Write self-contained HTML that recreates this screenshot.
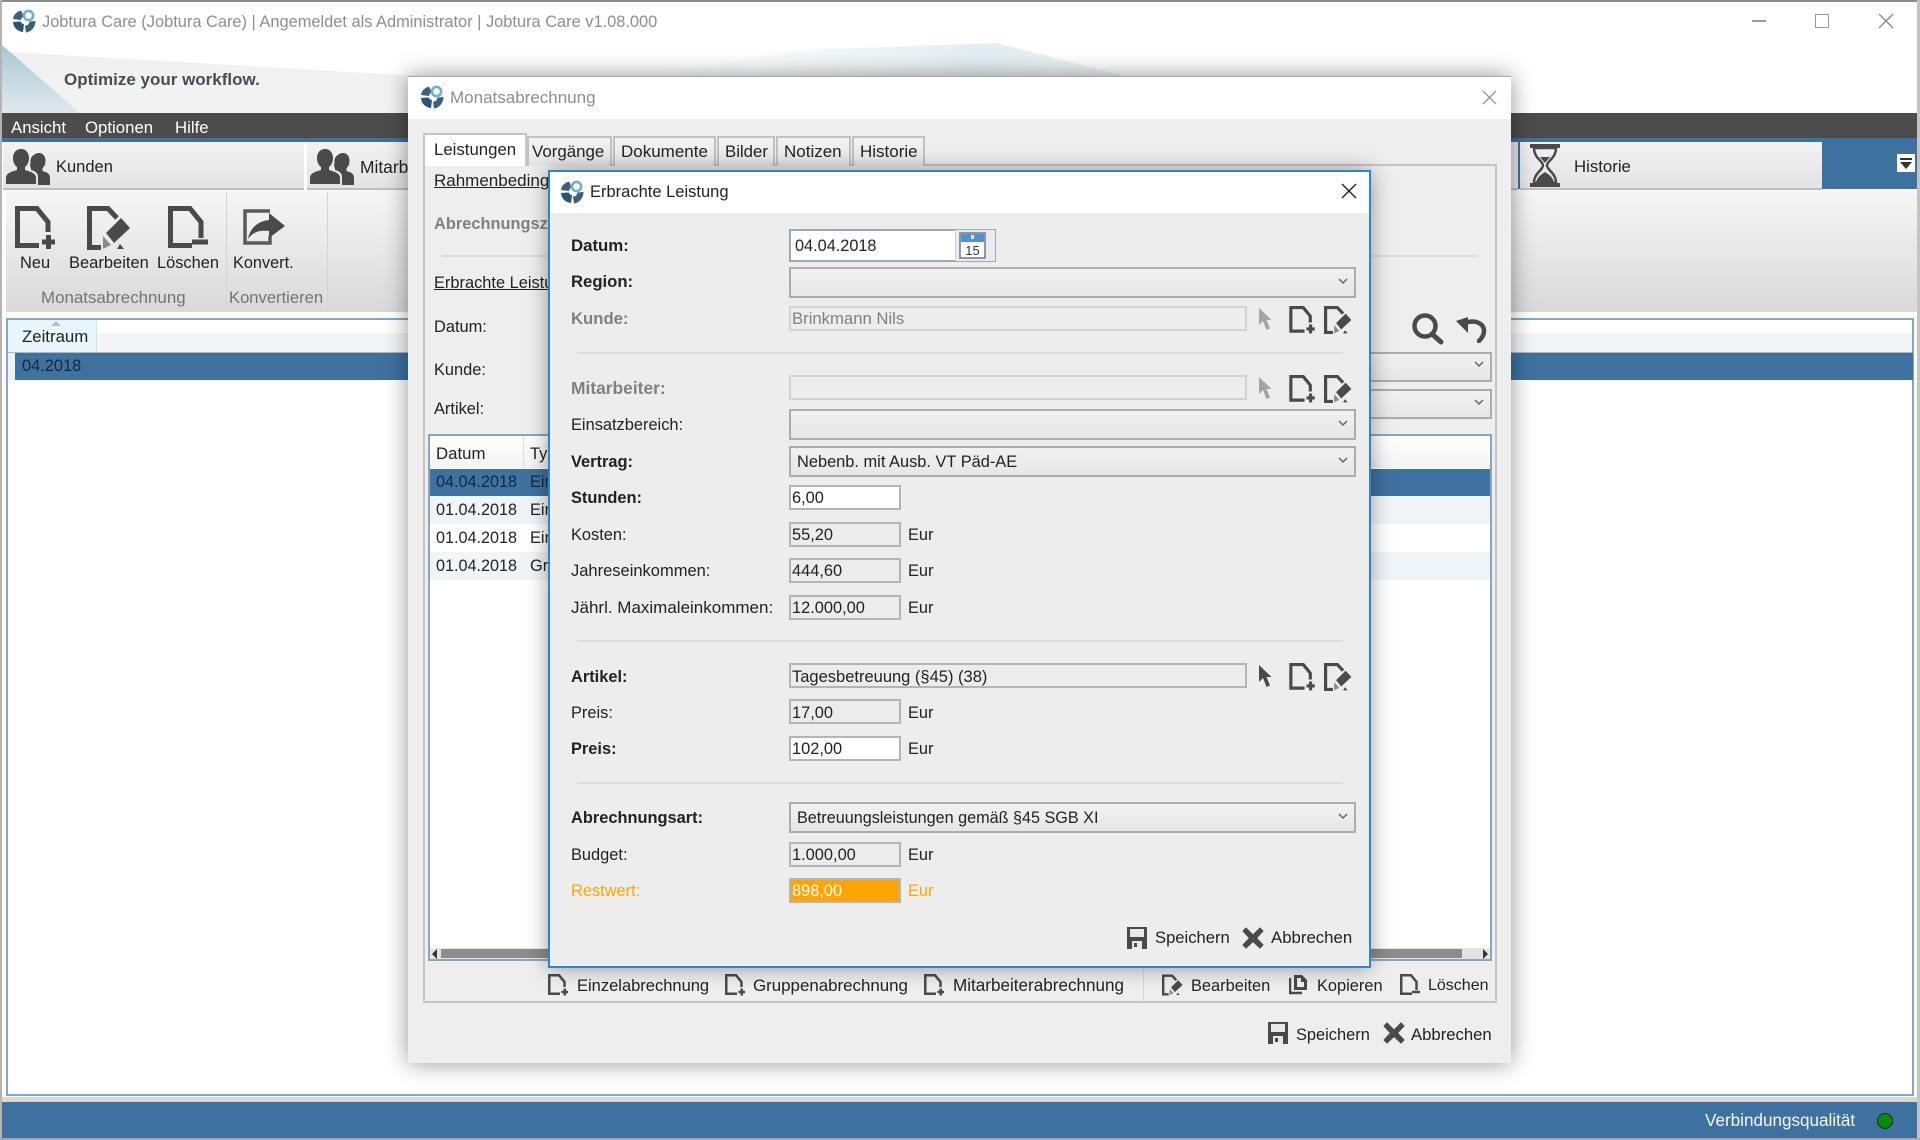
<!DOCTYPE html>
<html lang="de"><head><meta charset="utf-8"><title>Jobtura Care</title>
<style>
html,body{margin:0;padding:0;background:#fff}
#r{position:relative;width:1920px;height:1140px;overflow:hidden;background:#fff;font-family:"Liberation Sans",Arial,sans-serif;font-size:16.400px;color:#222;filter:blur(.3px)}
#r div,#r span,#r svg{position:absolute}
.t{white-space:nowrap;line-height:20px;height:20px}
.b{font-weight:bold}
.g{color:#808080}
.u{text-decoration:underline}
.cb{box-sizing:border-box;border:2px solid #acacac;background:linear-gradient(#f1f1f1,#e6e6e6)}
.in{box-sizing:border-box;border:2px solid #b4b4b4;background:#ececec}
.w{background:#fff}
.dis{border-color:#d2d2d2;background:#ededed}
.hr{height:2px;background:#dcdcdc}
.tab{box-sizing:border-box;border:2px solid #c2c2c2;border-bottom:0;background:linear-gradient(#f3f3f3,#e6e6e6);top:136px;height:30px}
</style></head><body>
<div id="r">
<svg width="0" height="0" style="position:absolute">
<defs>
<symbol id="logo" viewBox="0 0 24 24">
<path d="M9 1.500C5 2.500 1.500 5.500 1 10l8 1c.4-2 1.300-3 3-3.500z" fill="#3e5f80"/>
<circle cx="16.500" cy="6.500" r="4.600" fill="none" stroke="#6fb0d0" stroke-width="2.600"/>
<path d="M1 13c.3 5 4 9.500 10 10l1-8c-2-.2-3-1-3.500-2.500z" fill="#2f5377"/>
<circle cx="7" cy="16" r="3.500" fill="#2f5377"/>
<path d="M23.500 12c0 6-4.500 11-9.500 11.500l-1-7c3 0 4-1.500 4.500-4z" fill="#3e5f80"/>
</symbol>
<symbol id="pp" viewBox="0 0 40 44"><path d="M24 39.500H2.500V2.500H22L33 16V26" fill="none" stroke="#4a4a4a" stroke-width="5"/><path d="M27 36H40M33.500 29V43" stroke="#4a4a4a" stroke-width="5" fill="none"/></symbol>
<symbol id="pm" viewBox="0 0 40 44"><path d="M24 39.500H2.500V2.500H22L33 16V32" fill="none" stroke="#4a4a4a" stroke-width="5"/><path d="M24 36H40" stroke="#4a4a4a" stroke-width="5" fill="none"/></symbol>
<symbol id="pe" viewBox="0 0 44 44"><path d="M14 41.500H2.500V2.500H21L30 12" fill="none" stroke="#4a4a4a" stroke-width="5"/><path d="M34 12L43 22L27 37L19 27Z" fill="#4a4a4a"/><path d="M16 30L24 39L16 43Z" fill="#8a8a8a"/><path d="M33 38L37 43H30Z" fill="#4a4a4a"/></symbol>
<symbol id="cur" viewBox="0 0 14 24"><path d="M1 1V18L5 14L8.500 23L12 21.500L8.500 13H13.500Z"/></symbol>
<symbol id="sv" viewBox="0 0 20 22"><path d="M0 0H20V22H0Z" fill="#4a4a4a"/><path d="M3 2H17V10H3Z" fill="#e9e9e9"/><path d="M5 14H15V22H5Z" fill="#e9e9e9"/><path d="M7 16H10V20H7Z" fill="#4a4a4a"/></symbol>
<symbol id="xx" viewBox="0 0 22 22"><path d="M4 1L11 8L18 1L21 4L14.500 11L21 18L18 21L11 14.500L4 21L1 18L7.500 11L1 4Z" fill="#4a4a4a" stroke="#4a4a4a" stroke-width="1"/></symbol>
<symbol id="ch" viewBox="0 0 10 7"><path d="M1 1L5 5L9 1" fill="none" stroke="#666" stroke-width="1.500"/></symbol>
<symbol id="usr" viewBox="0 0 44 36"><path d="M15 0c5 0 8 4 8 9 0 4-1.500 7-4 9v3c5 1.500 11 3 11 8v6H0v-6c0-5 6-6.500 11-8v-3c-2.500-2-4-5-4-9 0-5 3-9 8-9z" fill="#4a4a4a"/><path d="M33 4c4 0 6.500 3.500 6.500 7.500 0 3.500-1 6-3 7.500v3c3 1 7.500 2 7.500 6.500V36H32V28c0-4-3-6-7-7v-2c-1.500-1.500-.500-3.500-.500-7.500C24.500 7.500 29 4 33 4z" fill="#4a4a4a"/></symbol>
</defs>
</svg>

<!-- main window chrome -->
<div style="left:0;top:0;width:1920px;height:2px;background:#8c8c8c"></div>
<div style="left:0;top:0;width:2px;height:1140px;background:#b4b4b4"></div>
<div style="left:1917px;top:0;width:3px;height:1140px;background:#c4c4c4"></div>
<svg style="left:12px;top:9px" width="24" height="24"><use href="#logo"/></svg>
<span class="t g" style="left:42px;top:12px;font-size:16.400px;color:#8e8e8e">Jobtura Care (Jobtura Care) | Angemeldet als Administrator | Jobtura Care v1.08.000</span>
<svg style="left:0;top:40px" width="1500" height="74">
<defs><linearGradient id="a" x1="0" y1="0" x2="0" y2="1"><stop offset="0" stop-color="#a6c9d5"/><stop offset="1" stop-color="#dfe9ec"/></linearGradient>
<linearGradient id="c" x1="0" y1="0" x2="1" y2="0"><stop offset="0" stop-color="#eef4f6" stop-opacity="0"/><stop offset=".7" stop-color="#e3eef2"/><stop offset="1" stop-color="#edf3f5"/></linearGradient>
<linearGradient id="d" x1="0" y1="0" x2="0" y2="1"><stop offset="0" stop-color="#f0f0f0"/><stop offset="1" stop-color="#f3f3f3"/></linearGradient></defs>
<polygon points="10,12 420,36 420,73 80,73" fill="url(#d)"/>
<polygon points="2,5 80,73 2,73" fill="url(#a)"/>
<polygon points="640,36 800,10 997,3 1125,36" fill="url(#c)"/>
</svg>
<span class="t b" style="left:64px;top:70px;font-size:17px;color:#454d5a">Optimize your workflow.</span>

<div style="left:2px;top:113px;width:1915px;height:25px;background:#4c4c4c"></div>
<div style="left:2px;top:138px;width:1915px;height:4px;background:#3e71a0"></div>
<span class="t" style="left:11px;top:118px;color:#fff;font-size:16.800px">Ansicht</span>
<span class="t" style="left:85px;top:118px;color:#fff;font-size:16.800px">Optionen</span>
<span class="t" style="left:175px;top:118px;color:#fff;font-size:16.800px">Hilfe</span>

<div style="left:1500px;top:142px;width:417px;height:47px;background:#3e71a0"></div>
<div style="left:3px;top:142px;width:301px;height:46px;background:linear-gradient(#f2f2f2,#e3e3e3);border-bottom:2px solid #bdbdbd"></div>
<div style="left:307px;top:142px;width:300px;height:46px;background:linear-gradient(#f2f2f2,#e3e3e3);border-bottom:2px solid #bdbdbd"></div>
<div style="left:1510px;top:142px;width:8px;height:46px;background:#e8e8e8;border-bottom:2px solid #bdbdbd"></div>
<div style="left:1520px;top:142px;width:302px;height:46px;background:linear-gradient(#f2f2f2,#e3e3e3);border-bottom:2px solid #bdbdbd"></div>
<svg style="left:6px;top:149px" width="44" height="36"><use href="#usr"/></svg>
<span class="t" style="left:56px;top:157px;font-size:16.500px">Kunden</span>
<svg style="left:310px;top:149px" width="44" height="36"><use href="#usr"/></svg>
<span class="t" style="left:360px;top:157px;font-size:17.400px">Mitarbeiter</span>
<svg style="left:1530px;top:144px" width="30" height="43" viewBox="0 0 30 43"><path d="M0 0H30V4H0ZM0 39H30V43H0Z" fill="#4a4a4a"/><path d="M4 4C4 14 13 17 13 21.500C13 26 4 29 4 39H26C26 29 17 26 17 21.500C17 17 26 14 26 4Z" fill="none" stroke="#4a4a4a" stroke-width="2.500"/><path d="M10 13H20L15 19ZM6 38C8 32 12 30 15 28C18 30 22 32 24 38Z" fill="#4a4a4a"/></svg>
<span class="t" style="left:1574px;top:157px;font-size:16.800px">Historie</span>
<div style="left:1897px;top:154px;width:18px;height:18px;background:#fff"></div>
<svg style="left:1899px;top:157px" width="14" height="13"><path d="M1 1H13V3H1ZM1 5H13L7 12Z" fill="#333"/></svg>

<!-- ribbon -->
<div style="left:6px;top:190px;width:1911px;height:122px;background:linear-gradient(#f6f6f6,#d9d9d9)"></div>
<div style="left:226px;top:192px;width:1px;height:120px;background:#d4d4d4"></div>
<div style="left:327px;top:192px;width:1px;height:120px;background:#d4d4d4"></div>
<svg style="left:15px;top:206px" width="40" height="44"><use href="#pp"/></svg>
<svg style="left:87px;top:206px" width="44" height="44"><use href="#pe"/></svg>
<svg style="left:168px;top:206px" width="40" height="44"><use href="#pm"/></svg>
<svg style="left:242px;top:208px" width="44" height="38" viewBox="0 0 44 38"><path d="M28 3H3V35H28V28" fill="none" stroke="#5a5a5a" stroke-width="3.500"/><path d="M27 5L43 18L27 30V23C17 22 11 24 6 31C8 20 16 13 27 12Z" fill="#4a4a4a"/></svg>
<span class="t" style="left:20px;top:253px;font-size:16.400px">Neu</span>
<span class="t" style="left:69px;top:253px;font-size:16.500px">Bearbeiten</span>
<span class="t" style="left:157px;top:253px;font-size:16.400px">Löschen</span>
<span class="t" style="left:233px;top:253px;font-size:16.300px">Konvert.</span>
<span class="t" style="left:41px;top:288px;color:#747474;font-size:16.900px">Monatsabrechnung</span>
<span class="t" style="left:229px;top:288px;color:#747474;font-size:16.600px">Konvertieren</span>

<!-- main table -->
<div style="left:6px;top:318px;width:1908px;height:778px;box-sizing:border-box;border:2px solid #86a6c4;background:#fff"></div>
<div style="left:8px;top:320px;width:1904px;height:32px;background:linear-gradient(#fff,#fff 40%,#f3f4f6 40%,#f3f4f6)"></div>
<div style="left:8px;top:320px;width:8px;height:60px;background:#e9f4fb"></div>
<div style="left:16px;top:320px;width:80px;height:32px;background:#e9f4fb;border-right:1px solid #cfe3f0"></div>
<svg style="left:48px;top:320px" width="16" height="7"><path d="M3 6L8 1L13 6Z" fill="#a8c0d0"/></svg>
<div style="left:8px;top:352px;width:1904px;height:1px;background:#b0b8c0"></div>
<div style="left:15px;top:353px;width:1898px;height:27px;background:#3f71a1"></div>
<span class="t" style="left:22px;top:327px;font-size:16.800px">Zeitraum</span>
<span class="t" style="left:22px;top:356px;font-size:16.400px;color:#14283c">04.2018</span>

<!-- status -->
<div style="left:2px;top:1097px;width:1915px;height:5px;background:#d8d8d8"></div>
<div style="left:2px;top:1102px;width:1915px;height:36px;background:#3e71a0"></div>
<div style="left:0;top:1138px;width:1920px;height:2px;background:#a8a8a8"></div>
<span class="t" style="left:1705px;top:1111px;color:#f4f8fb;font-size:17.100px">Verbindungsqualität</span>
<div style="left:1877px;top:1113px;width:14px;height:14px;border-radius:50%;background:#078a0d;border:1px solid #1a2a20"></div>

<!-- window controls -->
<div style="left:1752px;top:20px;width:14px;height:2px;background:#9a9a9a"></div>
<div style="left:1815px;top:14px;width:12px;height:12px;border:1.500px solid #999"></div>
<svg style="left:1878px;top:13px" width="16" height="16"><path d="M1 1L15 15M15 1L1 15" stroke="#888" stroke-width="1.300"/></svg>

<!-- Monatsabrechnung -->
<div style="left:408px;top:76px;width:1103px;height:987px;background:#eeeeee;box-shadow:0 0 22px rgba(0,0,0,.42);border-top:1px solid #a5a5a5;box-sizing:border-box"></div>
<div style="left:408px;top:77px;width:1103px;height:42px;background:#fff"></div>
<svg style="left:420px;top:85px" width="24" height="24"><use href="#logo"/></svg>
<span class="t" style="left:450px;top:88px;color:#8d8d8d;font-size:17px">Monatsabrechnung</span>
<svg style="left:1482px;top:90px" width="15" height="15"><path d="M1 1L14 14M14 1L1 14" stroke="#999" stroke-width="1.300"/></svg>

<div style="left:423px;top:164px;width:1074px;height:839px;box-sizing:border-box;border:2px solid #c4c4c4;background:#eeeeee"></div>
<div class="tab" style="left:527px;width:85px"></div>
<div class="tab" style="left:613px;width:103px"></div>
<div class="tab" style="left:717px;width:58px"></div>
<div class="tab" style="left:776px;width:75px"></div>
<div class="tab" style="left:852px;width:73px"></div>
<div style="left:423px;top:133px;width:104px;height:33px;box-sizing:border-box;border:2px solid #c4c4c4;border-bottom:0;background:#fff"></div>
<span class="t" style="left:434px;top:140px;font-size:16.800px">Leistungen</span>
<span class="t" style="left:532px;top:142px;font-size:16.900px">Vorgänge</span>
<span class="t" style="left:621px;top:142px;font-size:17px">Dokumente</span>
<span class="t" style="left:725px;top:142px;font-size:16.800px">Bilder</span>
<span class="t" style="left:784px;top:142px;font-size:17px">Notizen</span>
<span class="t" style="left:860px;top:142px;font-size:17px">Historie</span>

<span class="t u" style="left:434px;top:171px;font-size:17px">Rahmenbedingungen</span>
<span class="t b" style="left:434px;top:214px;font-size:16.400px;color:#808080">Abrechnungszeitraum</span>
<div class="hr" style="left:441px;top:255px;width:1036px"></div>
<span class="t u" style="left:434px;top:273px;font-size:16.400px">Erbrachte Leistungen</span>
<span class="t" style="left:434px;top:317px;font-size:16.400px">Datum:</span>
<span class="t" style="left:434px;top:360px;font-size:16.400px">Kunde:</span>
<span class="t" style="left:434px;top:399px;font-size:16.400px">Artikel:</span>
<svg style="left:1411px;top:313px" width="33" height="32" viewBox="0 0 33 32"><circle cx="14" cy="13" r="10.500" fill="none" stroke="#4a4a4a" stroke-width="4.500"/><path d="M21 21L30 29" stroke="#4a4a4a" stroke-width="5" stroke-linecap="round"/></svg>
<svg style="left:1454px;top:316px" width="33" height="27" viewBox="0 0 33 27"><path d="M11 7C22 3 30 8 30 15C30 19 28 22 25 25" fill="none" stroke="#4a4a4a" stroke-width="4.500" stroke-linecap="round"/><path d="M2 5L14 1V17Z" fill="#4a4a4a"/></svg>
<div class="cb" style="left:1300px;top:352px;width:192px;height:30px"></div>
<div class="cb" style="left:1300px;top:389px;width:192px;height:30px"></div>
<svg style="left:1474px;top:361px" width="10" height="7"><use href="#ch"/></svg>
<svg style="left:1474px;top:399px" width="10" height="7"><use href="#ch"/></svg>

<div style="left:428px;top:434px;width:1064px;height:527px;box-sizing:border-box;border:2px solid #86a6c4;background:#fff"></div>
<div style="left:430px;top:436px;width:1060px;height:32px;background:linear-gradient(#fff,#f3f3f3)"></div>
<div style="left:523px;top:436px;width:1px;height:32px;background:#dcdcdc"></div>
<div style="left:430px;top:469px;width:1060px;height:27px;background:#3f71a1"></div>
<div style="left:430px;top:496px;width:1060px;height:28px;background:#f0f5fa"></div>
<div style="left:430px;top:552px;width:1060px;height:28px;background:#f0f5fa"></div>
<span class="t" style="left:436px;top:444px;font-size:16.800px">Datum</span>
<span class="t" style="left:530px;top:444px;font-size:16.400px">Typ</span>
<span class="t" style="left:436px;top:472px;font-size:16.200px;color:#14283c">04.04.2018</span>
<span class="t" style="left:530px;top:472px;font-size:16.400px;color:#14283c">Einzel</span>
<span class="t" style="left:436px;top:500px;font-size:16.200px">01.04.2018</span>
<span class="t" style="left:530px;top:500px;font-size:16.400px">Einzel</span>
<span class="t" style="left:436px;top:528px;font-size:16.200px">01.04.2018</span>
<span class="t" style="left:530px;top:528px;font-size:16.400px">Einzel</span>
<span class="t" style="left:436px;top:556px;font-size:16.200px">01.04.2018</span>
<span class="t" style="left:530px;top:556px;font-size:16.400px">Gruppe</span>
<div style="left:430px;top:948px;width:1060px;height:11px;background:#e4e4e4"></div>
<div style="left:441px;top:949px;width:1021px;height:9px;background:#8c8c8c"></div>
<svg style="left:431px;top:949px" width="8" height="10"><path d="M6 0L1 5L6 10Z" fill="#333"/></svg>
<svg style="left:1481px;top:949px" width="8" height="10"><path d="M2 0L7 5L2 10Z" fill="#333"/></svg>

<div style="left:1143px;top:968px;width:1px;height:34px;background:#d8d8d8"></div>
<svg style="left:548px;top:974px" width="20" height="22"><use href="#pp"/></svg>
<span class="t" style="left:577px;top:976px;font-size:16.500px">Einzelabrechnung</span>
<svg style="left:725px;top:974px" width="20" height="22"><use href="#pp"/></svg>
<span class="t" style="left:753px;top:976px;font-size:16.900px">Gruppenabrechnung</span>
<svg style="left:924px;top:974px" width="20" height="22"><use href="#pp"/></svg>
<span class="t" style="left:953px;top:976px;font-size:17.100px">Mitarbeiterabrechnung</span>
<svg style="left:1162px;top:974px" width="21" height="22"><use href="#pe"/></svg>
<span class="t" style="left:1191px;top:976px;font-size:16.400px">Bearbeiten</span>
<svg style="left:1289px;top:974px" width="20" height="22" viewBox="0 0 20 22"><path d="M1 4V19H13" fill="none" stroke="#4a4a4a" stroke-width="2.500"/><path d="M5 1H13L18 6V16H5Z" fill="#4a4a4a"/><path d="M8 4H12V8H15V13H8Z" fill="#eee"/></svg>
<span class="t" style="left:1317px;top:976px;font-size:16.400px">Kopieren</span>
<svg style="left:1400px;top:974px" width="20" height="22"><use href="#pm"/></svg>
<span class="t" style="left:1428px;top:976px;font-size:16px">Löschen</span>

<svg style="left:1268px;top:1022px" width="20" height="22"><use href="#sv"/></svg>
<span class="t" style="left:1296px;top:1025px;font-size:16.400px">Speichern</span>
<svg style="left:1383px;top:1022px" width="22" height="22"><use href="#xx"/></svg>
<span class="t" style="left:1411px;top:1025px;font-size:16.700px">Abbrechen</span>

<!-- Erbrachte Leistung dialog -->
<div style="left:548px;top:170px;width:823px;height:798px;box-sizing:border-box;border:2px solid #2a86d0;background:#ededed;box-shadow:0 0 20px rgba(0,0,0,.38)"></div>
<div style="left:550px;top:172px;width:819px;height:41px;background:#fff"></div>
<svg style="left:560px;top:180px" width="24" height="24"><use href="#logo"/></svg>
<span class="t" style="left:590px;top:182px;font-size:16.500px">Erbrachte Leistung</span>
<svg style="left:1341px;top:183px" width="16" height="16"><path d="M1 1L15 15M15 1L1 15" stroke="#222" stroke-width="1.400"/></svg>

<span class="t b" style="left:571px;top:236px;font-size:16.800px">Datum:</span>
<div class="in w" style="left:789px;top:229px;width:207px;height:33px;border-color:#9aa9b8"></div>
<div style="left:955px;top:230px;width:39px;height:31px;background:#e8ecf0;border-left:1px solid #d0d0d0"></div>
<svg style="left:959px;top:232px" width="28" height="27" viewBox="0 0 28 27"><rect x="1" y="1" width="25" height="25" fill="#fff" stroke="#6c7a86" stroke-width="1.500"/><rect x="2" y="2" width="23" height="8" fill="#4e93d0"/><rect x="12" y="3" width="3" height="4" fill="#dbe9f5"/><text x="13.500" y="23" text-anchor="middle" font-size="13" font-family="Liberation Sans" fill="#333">15</text></svg>
<span class="t" style="left:795px;top:236px;font-size:16.300px">04.04.2018</span>

<span class="t b" style="left:571px;top:272px;font-size:16.700px">Region:</span>
<div class="cb" style="left:789px;top:267px;width:567px;height:31px"></div>
<svg style="left:1338px;top:278px" width="10" height="7"><use href="#ch"/></svg>

<span class="t b g" style="left:571px;top:309px;font-size:16.700px">Kunde:</span>
<div class="in dis" style="left:789px;top:306px;width:458px;height:25px"></div>
<span class="t g" style="left:792px;top:309px;font-size:16.700px">Brinkmann Nils</span>
<svg style="left:1258px;top:307px;fill:#a4a4a4" width="14" height="24"><use href="#cur"/></svg>
<svg style="left:1289px;top:306px" width="26" height="28"><use href="#pp"/></svg>
<svg style="left:1324px;top:306px" width="28" height="28"><use href="#pe"/></svg>

<div class="hr" style="left:577px;top:352px;width:766px"></div>

<span class="t b g" style="left:571px;top:378px;font-size:17.400px">Mitarbeiter:</span>
<div class="in dis" style="left:789px;top:375px;width:458px;height:25px"></div>
<svg style="left:1258px;top:376px;fill:#a4a4a4" width="14" height="24"><use href="#cur"/></svg>
<svg style="left:1289px;top:375px" width="26" height="28"><use href="#pp"/></svg>
<svg style="left:1324px;top:375px" width="28" height="28"><use href="#pe"/></svg>

<span class="t" style="left:571px;top:415px">Einsatzbereich:</span>
<div class="cb" style="left:789px;top:409px;width:567px;height:31px"></div>
<svg style="left:1338px;top:420px" width="10" height="7"><use href="#ch"/></svg>

<span class="t b" style="left:571px;top:452px">Vertrag:</span>
<div class="cb" style="left:789px;top:446px;width:567px;height:31px"></div>
<span class="t" style="left:797px;top:452px;font-size:16.400px">Nebenb. mit Ausb. VT Päd-AE</span>
<svg style="left:1338px;top:457px" width="10" height="7"><use href="#ch"/></svg>

<span class="t b" style="left:571px;top:488px">Stunden:</span>
<div class="in w" style="left:789px;top:485px;width:112px;height:25px"></div>
<span class="t" style="left:792px;top:488px;font-size:16.400px">6,00</span>

<span class="t" style="left:571px;top:525px">Kosten:</span>
<div class="in" style="left:789px;top:522px;width:112px;height:25px"></div>
<span class="t" style="left:792px;top:525px">55,20</span>
<span class="t" style="left:908px;top:525px">Eur</span>

<span class="t" style="left:571px;top:561px;font-size:16.500px">Jahreseinkommen:</span>
<div class="in" style="left:789px;top:558px;width:112px;height:25px"></div>
<span class="t" style="left:792px;top:561px">444,60</span>
<span class="t" style="left:908px;top:561px">Eur</span>

<span class="t" style="left:571px;top:598px;font-size:17px">Jährl. Maximaleinkommen:</span>
<div class="in" style="left:789px;top:595px;width:112px;height:25px"></div>
<span class="t" style="left:792px;top:598px">12.000,00</span>
<span class="t" style="left:908px;top:598px">Eur</span>

<div class="hr" style="left:577px;top:640px;width:766px"></div>

<span class="t b" style="left:571px;top:667px">Artikel:</span>
<div class="in" style="left:789px;top:663px;width:458px;height:25px"></div>
<span class="t" style="left:792px;top:667px;font-size:16.500px">Tagesbetreuung (§45) (38)</span>
<svg style="left:1258px;top:664px;fill:#4a4a4a" width="14" height="24"><use href="#cur"/></svg>
<svg style="left:1289px;top:663px" width="26" height="28"><use href="#pp"/></svg>
<svg style="left:1324px;top:663px" width="28" height="28"><use href="#pe"/></svg>

<span class="t" style="left:571px;top:703px">Preis:</span>
<div class="in" style="left:789px;top:699px;width:112px;height:25px"></div>
<span class="t" style="left:792px;top:703px">17,00</span>
<span class="t" style="left:908px;top:703px">Eur</span>

<span class="t b" style="left:571px;top:739px">Preis:</span>
<div class="in w" style="left:789px;top:736px;width:112px;height:25px"></div>
<span class="t" style="left:792px;top:739px">102,00</span>
<span class="t" style="left:908px;top:739px">Eur</span>

<div class="hr" style="left:577px;top:782px;width:766px"></div>

<span class="t b" style="left:571px;top:808px">Abrechnungsart:</span>
<div class="cb" style="left:789px;top:802px;width:567px;height:31px"></div>
<span class="t" style="left:797px;top:808px;font-size:16.200px">Betreuungsleistungen gemäß §45 SGB XI</span>
<svg style="left:1338px;top:813px" width="10" height="7"><use href="#ch"/></svg>

<span class="t" style="left:571px;top:845px">Budget:</span>
<div class="in" style="left:789px;top:842px;width:112px;height:25px"></div>
<span class="t" style="left:792px;top:845px">1.000,00</span>
<span class="t" style="left:908px;top:845px">Eur</span>

<span class="t" style="left:571px;top:881px;color:#ffa500">Restwert:</span>
<div class="in" style="left:789px;top:878px;width:112px;height:25px;background:#ffa500"></div>
<span class="t" style="left:792px;top:881px;color:#fff">898,00</span>
<span class="t" style="left:908px;top:881px;color:#ffa500">Eur</span>

<svg style="left:1127px;top:927px" width="20" height="22"><use href="#sv"/></svg>
<span class="t" style="left:1155px;top:928px;font-size:16.600px">Speichern</span>
<svg style="left:1242px;top:927px" width="22" height="22"><use href="#xx"/></svg>
<span class="t" style="left:1271px;top:928px;font-size:16.800px">Abbrechen</span>
</div>
</body></html>
